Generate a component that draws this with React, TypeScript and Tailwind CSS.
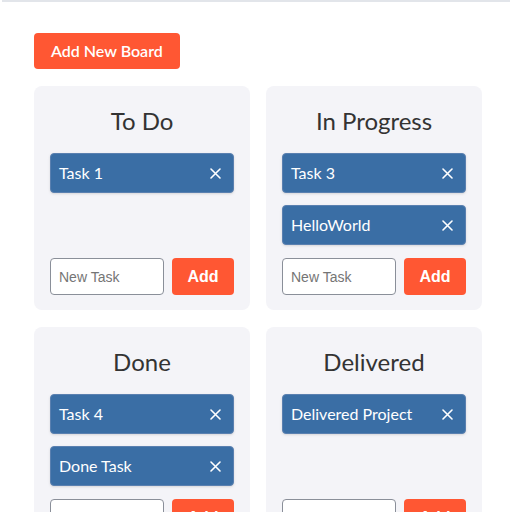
const boards = [
  { title: "To Do", tasks: ["Task 1"] },
  { title: "In Progress", tasks: ["Task 3", "HelloWorld"] },
  { title: "Done", tasks: ["Task 4", "Done Task"] },
  { title: "Delivered", tasks: ["Delivered Project"] },
];

const XIcon = () => (
  <svg width="11" height="11" viewBox="0 0 11 11" className="shrink-0">
    <path d="M1 1L10 10M10 1L1 10" stroke="white" strokeWidth="1.6" strokeLinecap="round" />
  </svg>
);

const App = () => {
  return (
    <div className="min-h-screen bg-white font-['Lato',sans-serif]">
      <div className="mx-[2px] h-[2px] bg-[#e2e5ea]" />
      <div className="pl-[34px] pr-[30px] pt-[31px]">
        <button className="h-9 px-[17px] rounded bg-[#ff5733] text-white text-[16px] font-semibold">
          Add New Board
        </button>
        <div className="grid grid-cols-2 gap-x-4 gap-y-[17px] mt-[17px]">
          {boards.map((b) => (
            <div key={b.title} className="bg-[#f4f4f8] rounded-lg px-4 pt-[17px] pb-[15px] flex flex-col">
              <h2 className="text-center text-[24px] leading-9 text-[#333] mb-[14px]">{b.title}</h2>
              <div className="flex-1 flex flex-col gap-3">
                {b.tasks.map((t) => (
                  <div
                    key={t}
                    className="h-10 bg-[#3a6ea5] rounded border border-[#5a80b0] shadow-sm flex items-center justify-between pl-2 pr-3 text-white text-[16px]"
                  >
                    <span>{t}</span>
                    <XIcon />
                  </div>
                ))}
              </div>
              <div className="flex gap-2 mt-[13px]">
                <input
                  placeholder="New Task"
                  className="w-[114px] h-[37px] px-2 bg-white border border-[#8a8f99] rounded text-[14px] font-['Liberation_Sans',sans-serif] placeholder:text-[#757575] outline-none"
                />
                <button className="flex-1 h-[37px] rounded bg-[#ff5733] text-white text-[16px] font-bold font-['Liberation_Sans',sans-serif]">
                  Add
                </button>
              </div>
            </div>
          ))}
        </div>
      </div>
    </div>
  );
};

export default App;
